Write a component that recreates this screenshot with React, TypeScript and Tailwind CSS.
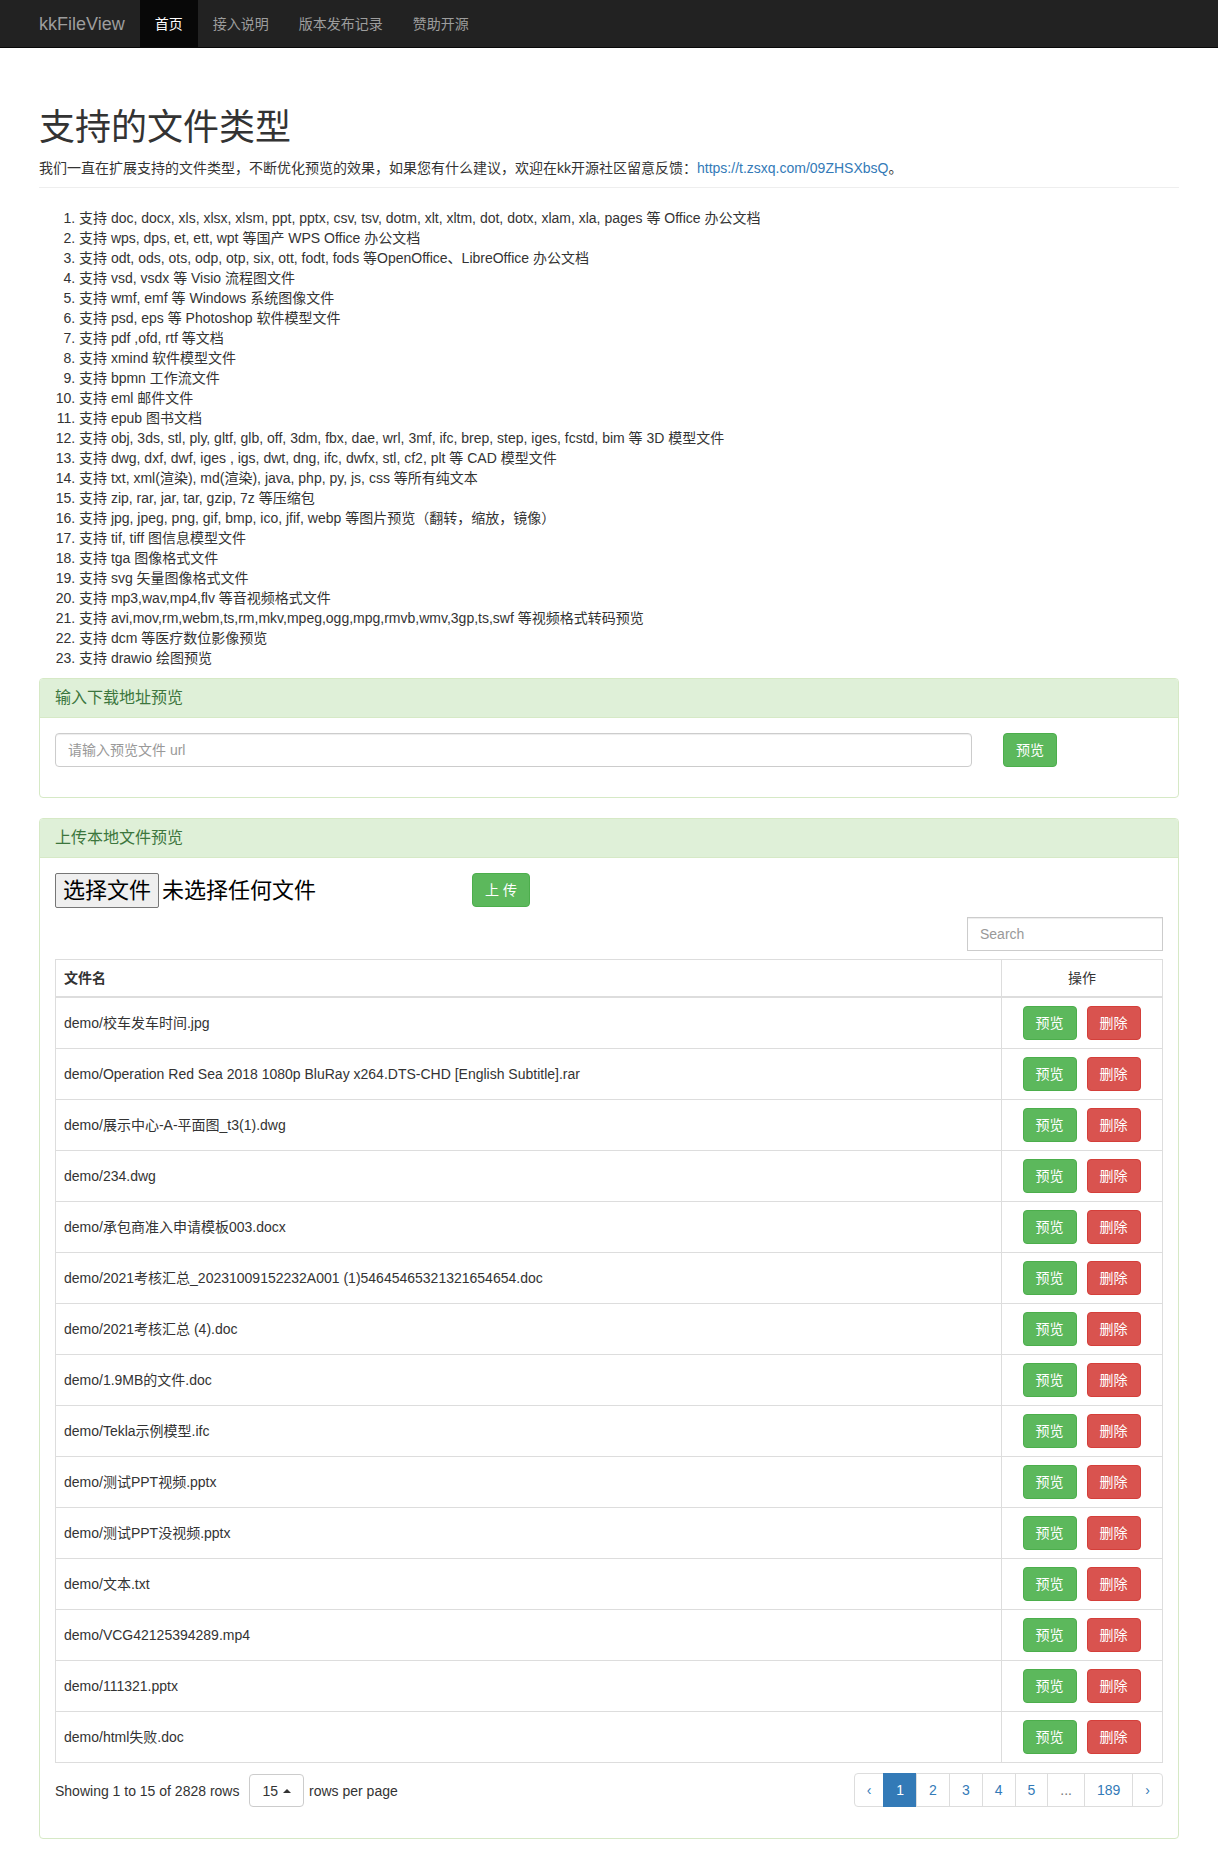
import React from "react";

const FILE_TYPES = [
  "支持 doc, docx, xls, xlsx, xlsm, ppt, pptx, csv, tsv, dotm, xlt, xltm, dot, dotx, xlam, xla, pages 等 Office 办公文档",
  "支持 wps, dps, et, ett, wpt 等国产 WPS Office 办公文档",
  "支持 odt, ods, ots, odp, otp, six, ott, fodt, fods 等OpenOffice、LibreOffice 办公文档",
  "支持 vsd, vsdx 等 Visio 流程图文件",
  "支持 wmf, emf 等 Windows 系统图像文件",
  "支持 psd, eps 等 Photoshop 软件模型文件",
  "支持 pdf ,ofd, rtf 等文档",
  "支持 xmind 软件模型文件",
  "支持 bpmn 工作流文件",
  "支持 eml 邮件文件",
  "支持 epub 图书文档",
  "支持 obj, 3ds, stl, ply, gltf, glb, off, 3dm, fbx, dae, wrl, 3mf, ifc, brep, step, iges, fcstd, bim 等 3D 模型文件",
  "支持 dwg, dxf, dwf, iges , igs, dwt, dng, ifc, dwfx, stl, cf2, plt 等 CAD 模型文件",
  "支持 txt, xml(渲染), md(渲染), java, php, py, js, css 等所有纯文本",
  "支持 zip, rar, jar, tar, gzip, 7z 等压缩包",
  "支持 jpg, jpeg, png, gif, bmp, ico, jfif, webp 等图片预览（翻转，缩放，镜像）",
  "支持 tif, tiff 图信息模型文件",
  "支持 tga 图像格式文件",
  "支持 svg 矢量图像格式文件",
  "支持 mp3,wav,mp4,flv 等音视频格式文件",
  "支持 avi,mov,rm,webm,ts,rm,mkv,mpeg,ogg,mpg,rmvb,wmv,3gp,ts,swf 等视频格式转码预览",
  "支持 dcm 等医疗数位影像预览",
  "支持 drawio 绘图预览",
];

const FILES = [
  "demo/校车发车时间.jpg",
  "demo/Operation Red Sea 2018 1080p BluRay x264.DTS-CHD [English Subtitle].rar",
  "demo/展示中心-A-平面图_t3(1).dwg",
  "demo/234.dwg",
  "demo/承包商准入申请模板003.docx",
  "demo/2021考核汇总_20231009152232A001 (1)54645465321321654654.doc",
  "demo/2021考核汇总 (4).doc",
  "demo/1.9MB的文件.doc",
  "demo/Tekla示例模型.ifc",
  "demo/测试PPT视频.pptx",
  "demo/测试PPT没视频.pptx",
  "demo/文本.txt",
  "demo/VCG42125394289.mp4",
  "demo/111321.pptx",
  "demo/html失败.doc",
];

const PAGES = ["‹", "1", "2", "3", "4", "5", "...", "189", "›"];

const NAV = ["首页", "接入说明", "版本发布记录", "赞助开源"];

function Navbar() {
  return (
    <nav className="h-[48px] bg-[#222] border-b border-[#080808]">
      <div className="w-[1170px] mx-auto px-[15px] flex h-full">
        <a className="-ml-[15px] px-[15px] flex items-center text-[18px] text-[#9d9d9d]">
          kkFileView
        </a>
        <ul className="flex h-full">
          {NAV.map((item, i) => (
            <li key={item} className="h-full">
              <a
                className={
                  i === 0
                    ? "h-full flex items-center px-[15px] text-[14px] bg-[#080808] text-white"
                    : "h-full flex items-center px-[15px] text-[14px] text-[#9d9d9d]"
                }
              >
                {item}
              </a>
            </li>
          ))}
        </ul>
      </div>
    </nav>
  );
}

function PanelHeading({ title }: { title: string }) {
  return (
    <div className="bg-[#dff0d8] text-[#3c763d] px-[15px] py-[10px] border-b border-[#d6e9c6] rounded-t-[3px]">
      <h3 className="text-[16px] leading-[18px]">{title}</h3>
    </div>
  );
}

function Btn({
  kind,
  children,
}: {
  kind: "success" | "danger";
  children: React.ReactNode;
}) {
  return (
    <button
      className={
        kind === "success"
          ? "h-[34px] px-[12px] text-[14px] leading-[20px] text-white rounded-[4px] border bg-[#5cb85c] border-[#4cae4c]"
          : "h-[34px] px-[12px] text-[14px] leading-[20px] text-white rounded-[4px] border bg-[#d9534f] border-[#d43f3a]"
      }
    >
      {children}
    </button>
  );
}

export default function App() {
  return (
    <div className="min-h-[1866px] bg-white text-[#333] text-[14px] leading-[20px] font-['Liberation_Sans','Noto_Sans_CJK_SC',sans-serif]">
      <Navbar />

      <div className="w-[1170px] mx-auto px-[15px]">
        {/* page header */}
        <div className="mt-[60px] pb-[9px] border-b border-[#eee] mb-[20px]">
          <h1 className="text-[36px] leading-[40px] font-normal">支持的文件类型</h1>
          <p className="mt-[10px]">
            我们一直在扩展支持的文件类型，不断优化预览的效果，如果您有什么建议，欢迎在kk开源社区留意反馈：
            <a className="text-[#337ab7]">https://t.zsxq.com/09ZHSXbsQ</a>。
          </p>
        </div>

        <ol className="list-decimal pl-[40px] mb-[10px]">
          {FILE_TYPES.map((t) => (
            <li key={t} className="leading-[20px]">
              {t}
            </li>
          ))}
        </ol>

        {/* url preview */}
        <div className="border border-[#d6e9c6] rounded-[4px] mb-[20px]">
          <PanelHeading title="输入下载地址预览" />
          <div className="p-[15px]">
            <div className="flex items-center mb-[15px]">
              <input
                className="w-[917px] h-[34px] px-[12px] border border-[#ccc] rounded-[4px] shadow-[inset_0_1px_1px_rgba(0,0,0,0.075)] placeholder:text-[#999] outline-none"
                placeholder="请输入预览文件 url"
              />
              <div className="ml-[31px]">
                <Btn kind="success">预览</Btn>
              </div>
            </div>
          </div>
        </div>

        {/* local upload */}
        <div className="border border-[#d6e9c6] rounded-[4px] mb-[29px]">
          <PanelHeading title="上传本地文件预览" />
          <div className="p-[15px] pb-[14px]">
            <div className="flex items-start">
              <div className="w-[417px] flex items-center text-[22px] text-black">
                <span className="h-[35px] px-[7px] leading-[33px] bg-[#efefef] border border-[#767676] rounded-[2px]">
                  选择文件
                </span>
                <span className="ml-[3px]">未选择任何文件</span>
              </div>
              <Btn kind="success">上 传</Btn>
            </div>

            <div className="flex justify-end mt-[9px] mb-[8px]">
              <input
                className="w-[196px] h-[34px] px-[12px] border border-[#ccc] shadow-[inset_0_1px_1px_rgba(0,0,0,0.075)] placeholder:text-[#999] outline-none"
                placeholder="Search"
              />
            </div>

            <table className="w-full border border-[#ddd] border-collapse">
              <thead>
                <tr className="border-b-2 border-[#ddd]">
                  <th className="px-[8px] py-[8px] text-left font-bold">文件名</th>
                  <th className="w-[161px] px-[8px] py-[8px] text-center font-normal border-l border-[#ddd]">
                    操作
                  </th>
                </tr>
              </thead>
              <tbody>
                {FILES.map((f) => (
                  <tr key={f} className="border-t border-[#ddd]">
                    <td className="px-[8px] py-[8px] align-middle">{f}</td>
                    <td className="px-[8px] py-[8px] border-l border-[#ddd]">
                      <div className="flex justify-center gap-[10px] -ml-[1px]">
                        <Btn kind="success">预览</Btn>
                        <Btn kind="danger">删除</Btn>
                      </div>
                    </td>
                  </tr>
                ))}
              </tbody>
            </table>

            <div className="flex justify-between items-start mt-[10px] mb-[17px]">
              <div className="flex items-center mt-[1px]">
                <span>Showing 1 to 15 of 2828 rows</span>
                <span className="ml-[10px] h-[33px] px-[12px] border border-[#ccc] rounded-[4px] flex items-center gap-[5px]">
                  15
                  <span className="w-0 h-0 border-x-[4px] border-x-transparent border-b-[4px] border-b-[#333]" />
                </span>
                <span className="ml-[5px]">rows per page</span>
              </div>
              <ul className="flex">
                {PAGES.map((p, i) => (
                  <li key={p + i}>
                    <a
                      className={
                        p === "1"
                          ? "block -ml-px px-[12px] py-[6px] border border-[#337ab7] bg-[#337ab7] text-white"
                          : p === "..."
                            ? "block -ml-px px-[12px] py-[6px] border border-[#ddd] text-[#777]"
                            : i === 0
                              ? "block px-[12px] py-[6px] border border-[#ddd] text-[#337ab7] rounded-l-[4px]"
                              : i === PAGES.length - 1
                                ? "block -ml-px px-[12px] py-[6px] border border-[#ddd] text-[#337ab7] rounded-r-[4px]"
                                : "block -ml-px px-[12px] py-[6px] border border-[#ddd] text-[#337ab7]"
                      }
                    >
                      {p}
                    </a>
                  </li>
                ))}
              </ul>
            </div>
          </div>
        </div>
      </div>
    </div>
  );
}
